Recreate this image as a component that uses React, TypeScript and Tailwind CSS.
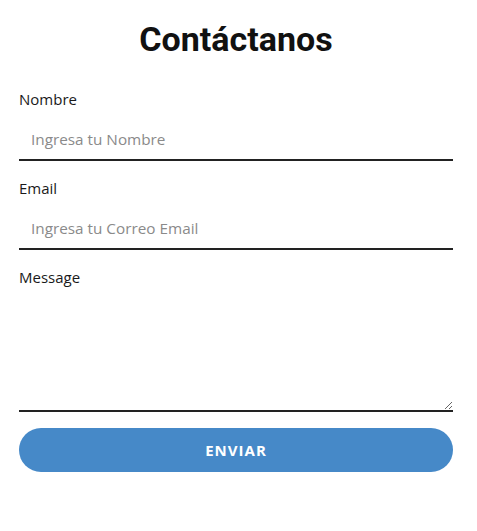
export default function App() {
  return (
    <div className="min-h-screen bg-white text-[#1a1a1a]" style={{ fontFamily: '"Open Sans", sans-serif' }}>
      <form className="w-[434px] ml-[19px] pt-[17px]" onSubmit={(e) => e.preventDefault()}>
        <h1 className="text-center text-[34px] leading-[44px] font-bold text-[#111] mb-[27px]" style={{ fontFamily: 'Roboto, sans-serif' }}>
          Contáctanos
        </h1>

        <div className="flex flex-col">
          <label className="text-[15px] leading-[22px]">Nombre</label>
          <input
            type="text"
            placeholder="Ingresa tu Nombre"
            className="mt-1 h-[47px] px-3 pt-1 text-[15.3px] border-b-2 border-[#222] outline-none placeholder:text-[#8a8a8a]"
          />
        </div>

        <div className="flex flex-col mt-4">
          <label className="text-[15px] leading-[22px]">Email</label>
          <input
            type="email"
            placeholder="Ingresa tu Correo Email"
            className="mt-1 h-[47px] px-3 pt-1 text-[15.3px] border-b-2 border-[#222] outline-none placeholder:text-[#8a8a8a]"
          />
        </div>

        <div className="flex flex-col mt-4">
          <label className="text-[15px] leading-[22px]">Message</label>
          <textarea className="mt-1 h-[120px] px-3 py-2 text-[15px] border-b-2 border-[#222] outline-none" />
        </div>

        <button
          type="submit"
          className="mt-4 w-full h-[44px] rounded-full bg-[#4689c8] text-white text-[15px] font-bold tracking-[1px]"
        >
          ENVIAR
        </button>
      </form>
    </div>
  );
}
